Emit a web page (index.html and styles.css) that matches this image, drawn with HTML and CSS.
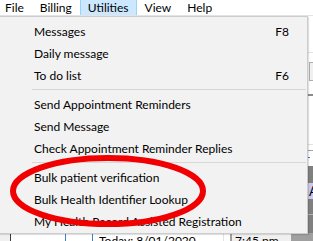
FILE: index.html
```html
<!DOCTYPE html>
<html>
<head>
<meta charset="utf-8">
<link rel="stylesheet" href="styles.css">
</head>
<body>
<div class="menubar">
  <span class="mb-item first">File</span>
  <span class="mb-item">Billing</span>
  <span class="mb-item active">Utilities</span>
  <span class="mb-item">View</span>
  <span class="mb-item">Help</span>
</div>
<div class="workspace">
  <div class="upper">
    <div class="main-area"></div>
    <div class="right-strip">
      <div class="rs-white rs-a"></div>
      <div class="rs-white rs-b"><div class="rs-button"></div></div>
      <div class="rs-white rs-c"></div>
      <div class="rs-white rs-d"></div>
      <div class="rs-white rs-e"><span class="rs-dot"></span></div>
      <div class="rs-grey rs-f"></div>
      <div class="rs-lav">A</div>
      <div class="rs-grey rs-g"></div>
      <div class="rs-grey rs-h"></div>
    </div>
  </div>
  <div class="lower">
    <div class="lw-gutter"></div>
    <div class="lw-spacer"></div>
    <div class="lw-box"></div>
    <div class="lw-date">Today: 8/01/2020</div>
    <div class="lw-time">7:45 pm</div>
    <div class="lw-dark"></div>
  </div>
</div>

<div class="menu">
  <div class="mi"><span class="mi-label">Messages</span><span class="mi-key">F8</span></div>
  <div class="mi"><span class="mi-label">Daily message</span></div>
  <div class="mi"><span class="mi-label">To do list</span><span class="mi-key">F6</span></div>
  <div class="sep"></div>
  <div class="mi"><span class="mi-label">Send Appointment Reminders</span></div>
  <div class="mi"><span class="mi-label">Send Message</span></div>
  <div class="mi"><span class="mi-label">Check Appointment Reminder Replies</span></div>
  <div class="sep"></div>
  <div class="mi"><span class="mi-label">Bulk patient verification</span></div>
  <div class="mi"><span class="mi-label">Bulk Health Identifier Lookup</span></div>
  <div class="mi"><span class="mi-label">My Health Record Assisted Registration</span></div>
</div>

<svg class="annotation" width="313" height="241" viewBox="0 0 313 241">
  <ellipse cx="108" cy="191" rx="95" ry="33" fill="none" stroke="#f00000" stroke-width="6"/>
</svg>
</body>
</html>
```
FILE: styles.css
```css
html, body {
  margin: 0;
  padding: 0;
}
body {
  width: 313px;
  height: 241px;
  overflow: hidden;
  position: relative;
  background: #ffffff;
  font-family: "Lato", "Open Sans", "Liberation Sans", sans-serif;
  font-size: 12px;
  color: #000;
}

/* menu bar */
.menubar {
  display: flex;
  height: 15px;
  border-bottom: 1px solid #e3e3e3;
  background: #fff;
  line-height: 15px;
}
.mb-item {
  padding: 0 7px;
  border: 1px solid transparent;
  border-top: 0;
  border-bottom: 0;
}
.mb-item.first {
  padding-left: 4px;
}
.mb-item.active {
  background: #cce8ff;
  border-color: #99d1ff;
  border-style: solid;
  border-width: 0 1px;
}

/* background workspace */
.workspace {
  display: flex;
  flex-direction: column;
}
.upper {
  display: flex;
  height: 217px;
}
.main-area {
  flex: 1;
  background: #f0f0f0;
}
.right-strip {
  width: 7px;
  display: flex;
  flex-direction: column;
}
.rs-white { background: #fff; }
.rs-a { height: 36px; border-bottom: 1px solid #e3e3e3; }
.rs-b { box-sizing: border-box; height: 41px; padding-top: 9px; padding-bottom: 13px; }
.rs-button {
  height: 17px;
  margin-left: 3px;
  background: #f0f0f0;
  border: 1px solid #adadad;
  border-right: 0;
}
.rs-c { box-sizing: border-box; height: 51px; border-top: 2px solid #8c8c8c; border-bottom: 1px solid #e3e3e3; }
.rs-d { height: 5px; border-bottom: 1px solid #a0a0a0; }
.rs-e { height: 15px; }
.rs-dot {
  display: block;
  width: 2px;
  height: 1px;
  margin: 6px 0 0 2px;
  background: #1e88e5;
}
.rs-grey { background: #808080; }
.rs-f { height: 17px; }
.rs-lav {
  height: 16px;
  background: #c8c8f0;
  padding-left: 3px;
  line-height: 16px;
  overflow: hidden;
  color: #000;
  font-size: 13px;
}
.rs-g { height: 15px; border-bottom: 1px solid #b4b4b4; }
.rs-h { flex: 1; }

.lower {
  display: flex;
  height: 8px;
  line-height: 15px;
  overflow: hidden;
}
.lw-gutter {
  width: 10px;
  background: #f0f0f0;
  border-right: 1px solid #3c3c3c;
}
.lw-spacer { width: 54px; }
.lw-box {
  width: 26px;
  height: 10px;
  border: 1px solid #3b7fd1;
  border-bottom: 0;
}
.lw-date {
  width: 124px;
  padding-left: 6px;
  border-right: 1px solid #e3e3e3;
}
.lw-time {
  width: 56px;
  padding-left: 3px;
  margin-left: 6px;
  background: #f0f0f0;
  border-left: 2px solid #a0a0a0;
}
.lw-dark {
  flex: 1;
  background: #a0a0a0;
}

/* dropdown menu (overlay) */
.menu {
  position: absolute;
  left: -1px;
  top: 16px;
  width: 305px;
  padding: 3px 0 1px 2px;
  background: #f2f2f2;
  border: 1px solid #cccccc;
  box-shadow: 1px 1px 1px rgba(0,0,0,0.12);
}
.mi {
  display: flex;
  height: 22px;
  align-items: center;
  padding-left: 32px;
  padding-right: 18px;
}
.mi-label { flex: 1; white-space: nowrap; }
.sep {
  height: 1px;
  margin: 3px 1px 3px 30px;
  background: #d7d7d7;
}

.annotation {
  position: absolute;
  left: 0;
  top: 0;
  pointer-events: none;
}
```
